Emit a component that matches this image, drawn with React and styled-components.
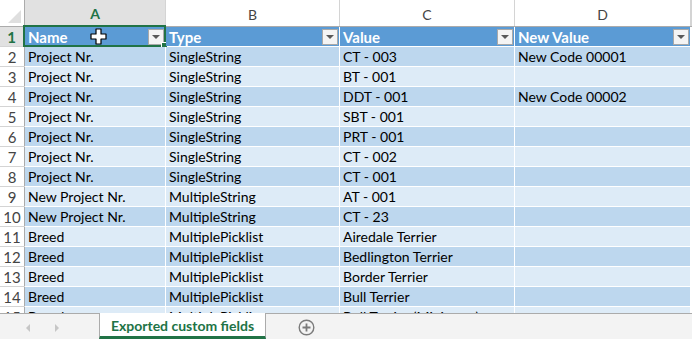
import React from "react";
import styled, { createGlobalStyle } from "styled-components";

const GlobalStyle = createGlobalStyle`
  html, body {
    margin: 0;
    padding: 0;
    background: #ffffff;
    overflow: hidden;
  }
  body {
    font-family: Lato, "Liberation Sans", sans-serif;
  }
`;

const GREEN = "#217346";

const Sheet = styled.div`
  display: flex;
  flex-direction: column;
  width: 692px;
  height: 339px;
  overflow: hidden;
`;

const Grid = styled.div`
  position: relative;
  height: 313px;
  overflow: hidden;
  background: #ffffff;
`;

const ColHeaderRow = styled.div`
  display: flex;
  height: 27px;
  box-sizing: border-box;
  border-bottom: 1px solid #ababab;
`;

const Corner = styled.div`
  position: relative;
  width: 25px;
  flex: none;
  box-sizing: border-box;
  border-right: 1px solid #ababab;
  &::after {
    content: "";
    position: absolute;
    right: 3px;
    bottom: 3px;
    width: 0;
    height: 0;
    border-left: 13px solid transparent;
    border-bottom: 13px solid #dfdfdf;
  }
`;

const ColHead = styled.div`
  width: ${(p) => p.$w}px;
  flex: ${(p) => (p.$w ? "none" : "1")};
  box-sizing: border-box;
  display: flex;
  align-items: center;
  justify-content: center;
  padding-top: 2px;
  font-size: 14px;
  color: ${(p) => (p.$active ? GREEN : "#444444")};
  font-weight: ${(p) => (p.$active ? 700 : 400)};
  background: ${(p) => (p.$active ? "#e1e1e1" : "#ffffff")};
  border-right: 1px solid #d4d4d4;
  border-bottom: ${(p) => (p.$active ? `2px solid ${GREEN}` : "none")};
  margin-bottom: ${(p) => (p.$active ? "-1px" : "0")};
`;

const Row = styled.div`
  display: flex;
  height: 20px;
  box-sizing: border-box;
  border-bottom: 1px solid #ffffff;
`;

const RowHead = styled.div`
  width: 25px;
  flex: none;
  box-sizing: border-box;
  display: flex;
  align-items: center;
  justify-content: center;
  padding-top: 1px;
  font-size: 15px;
  color: ${(p) => (p.$active ? GREEN : "#444444")};
  font-weight: ${(p) => (p.$active ? 700 : 400)};
  background: ${(p) => (p.$active ? "#e1e1e1" : "#ffffff")};
  border-right: ${(p) => (p.$active ? `2px solid ${GREEN}` : "1px solid #ababab")};
  box-shadow: 0 1px 0 #d4d4d4;
`;

const Cell = styled.div`
  position: relative;
  width: ${(p) => p.$w}px;
  flex: ${(p) => (p.$w ? "none" : "1")};
  box-sizing: border-box;
  display: flex;
  align-items: center;
  justify-content: space-between;
  padding: ${(p) => (p.$header ? "1px 0 0 3px" : "0 0 0 3px")};
  font-size: ${(p) => (p.$header ? "15px" : "14px")};
  line-height: 19px;
  white-space: nowrap;
  overflow: visible;
  color: ${(p) => (p.$header ? "#ffffff" : "#000000")};
  font-weight: ${(p) => (p.$header ? 700 : 400)};
  background: ${(p) => p.$bg};
  border-right: 1px solid ${(p) => (p.$plain ? "#d4d4d4" : "#ffffff")};
`;

const FilterBtn = styled.span`
  width: 16px;
  height: 16px;
  margin: -1px 1px 0 0;
  box-sizing: border-box;
  flex: none;
  display: flex;
  align-items: center;
  justify-content: center;
  background: #f4f4f4;
  border: 1px solid #a9a9a9;
  &::before {
    content: "";
    width: 0;
    height: 0;
    margin-top: 1px;
    border-left: 4px solid transparent;
    border-right: 4px solid transparent;
    border-top: 4px solid #595959;
  }
`;

const Selection = styled.div`
  position: absolute;
  top: -2px;
  left: -2px;
  right: -1px;
  bottom: -1px;
  border: 2px solid ${GREEN};
  pointer-events: none;
  &::after {
    content: "";
    position: absolute;
    right: -4px;
    bottom: -4px;
    width: 5px;
    height: 5px;
    background: ${GREEN};
    border: 1px solid #ffffff;
  }
`;

const Cursor = styled.svg`
  position: absolute;
  left: 90px;
  top: 28px;
`;

const TabBar = styled.div`
  display: flex;
  align-items: stretch;
  height: 26px;
  box-sizing: border-box;
  border-top: 1px solid #ababab;
  background: #f3f3f3;
`;

const Nav = styled.div`
  width: 99px;
  flex: none;
  display: flex;
  align-items: center;
  padding: 2px 0 0 26px;
  gap: 25px;
  box-sizing: border-box;
`;

const Arrow = styled.span`
  width: 0;
  height: 0;
  border-top: 4px solid transparent;
  border-bottom: 4px solid transparent;
  ${(p) =>
    p.$dir === "left"
      ? "border-right: 4px solid #c6c6c6;"
      : "border-left: 4px solid #c6c6c6;"}
`;

const Tab = styled.div`
  width: 167px;
  flex: none;
  margin-top: -1px;
  box-sizing: border-box;
  display: flex;
  align-items: center;
  justify-content: center;
  padding-top: 1px;
  background: #ffffff;
  border-left: 1px solid #ababab;
  border-right: 1px solid #ababab;
  border-bottom: 3px solid ${GREEN};
  color: ${GREEN};
  font-weight: 700;
  font-size: 14px;
`;

const AddSheet = styled.div`
  display: flex;
  align-items: center;
  margin-left: 32px;
  padding-top: 2px;
`;

const widths = [141, 174, 175, 176];
const letters = ["A", "B", "C", "D"];
const headers = ["Name", "Type", "Value", "New Value"];

const rows = [
  ["Project Nr.", "SingleString", "CT - 003", "New Code 00001"],
  ["Project Nr.", "SingleString", "BT - 001", ""],
  ["Project Nr.", "SingleString", "DDT - 001", "New Code 00002"],
  ["Project Nr.", "SingleString", "SBT - 001", ""],
  ["Project Nr.", "SingleString", "PRT - 001", ""],
  ["Project Nr.", "SingleString", "CT - 002", ""],
  ["Project Nr.", "SingleString", "CT - 001", ""],
  ["New Project Nr.", "MultipleString", "AT - 001", ""],
  ["New Project Nr.", "MultipleString", "CT - 23", ""],
  ["Breed", "MultiplePicklist", "Airedale Terrier", ""],
  ["Breed", "MultiplePicklist", "Bedlington Terrier", ""],
  ["Breed", "MultiplePicklist", "Border Terrier", ""],
  ["Breed", "MultiplePicklist", "Bull Terrier", ""],
  ["Breed", "MultiplePicklist", "Bull Terrier (Miniature)", ""],
];

const App = () => {
  return (
    <>
      <GlobalStyle />
      <Sheet>
        <Grid>
          <ColHeaderRow>
            <Corner />
            {letters.map((l, i) => (
              <ColHead key={l} $w={widths[i]} $active={i === 0}>
                {l}
              </ColHead>
            ))}
            <ColHead />
          </ColHeaderRow>

          <Row>
            <RowHead $active>1</RowHead>
            {headers.map((h, i) => (
              <Cell key={h} $w={widths[i]} $bg="#5b9bd5" $header>
                <span>{h}</span>
                <FilterBtn />
                {i === 0 && <Selection />}
              </Cell>
            ))}
            <Cell $bg="#ffffff" $plain />
          </Row>

          {rows.map((r, idx) => (
            <Row key={idx}>
              <RowHead>{idx + 2}</RowHead>
              {r.map((v, i) => (
                <Cell key={i} $w={widths[i]} $bg={idx % 2 === 0 ? "#bdd7ee" : "#ddebf7"}>
                  {v}
                </Cell>
              ))}
              <Cell $bg="#ffffff" $plain />
            </Row>
          ))}

          <Cursor width="17" height="17" viewBox="0 0 17 17">
            <path
              d="M6 1 H11 V6 H16 V11 H11 V16 H6 V11 H1 V6 H6 Z"
              fill="#ffffff"
              stroke="#000000"
              strokeWidth="1.2"
              strokeLinejoin="round"
            />
          </Cursor>
        </Grid>

        <TabBar>
          <Nav>
            <Arrow $dir="left" />
            <Arrow $dir="right" />
          </Nav>
          <Tab>Exported custom fields</Tab>
          <AddSheet>
            <svg width="17" height="17" viewBox="0 0 17 17">
              <circle cx="8.5" cy="8.5" r="7.3" fill="none" stroke="#7a7a7a" strokeWidth="1.4" />
              <path d="M8.5 4.5 V12.5 M4.5 8.5 H12.5" stroke="#7a7a7a" strokeWidth="1.8" />
            </svg>
          </AddSheet>
        </TabBar>
      </Sheet>
    </>
  );
};

export default App;
